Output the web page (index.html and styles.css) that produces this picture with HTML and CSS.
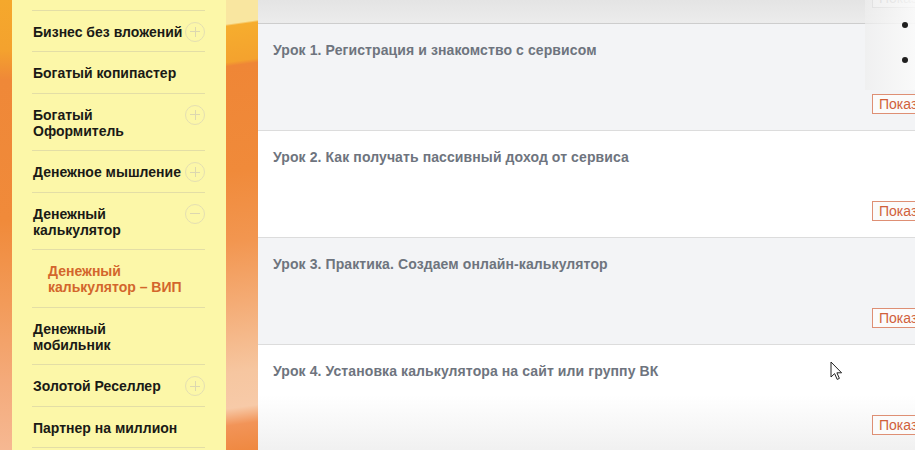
FILE: index.html
```html
<!DOCTYPE html>
<html lang="ru">
<head>
<meta charset="utf-8">
<title>Уроки</title>
<link rel="stylesheet" href="styles.css">
</head>
<body>
<aside class="sidebar">
  <div class="panel">
    <ul class="menu">
      <li class="item"><span class="label"></span><span class="toggle plus"></span></li>
      <li class="item"><span class="label">Бизнес без вложений</span><span class="toggle plus"></span></li>
      <li class="item"><span class="label">Богатый копипастер</span></li>
      <li class="item"><span class="label">Богатый<br>Оформитель</span><span class="toggle plus"></span></li>
      <li class="item"><span class="label">Денежное мышление</span><span class="toggle plus"></span></li>
      <li class="item"><span class="label">Денежный<br>калькулятор</span><span class="toggle minus"></span></li>
      <li class="item sub"><span class="label">Денежный<br>калькулятор – ВИП</span></li>
      <li class="item"><span class="label">Денежный<br>мобильник</span></li>
      <li class="item"><span class="label">Золотой Реселлер</span><span class="toggle plus"></span></li>
      <li class="item"><span class="label">Партнер на миллион</span></li>
    </ul>
  </div>
</aside>
<main class="content">
  <div class="lesson-prev"><button class="btn-show faded">Показать</button></div>
  <section class="lesson alt">
    <h3 class="lesson-title">Урок 1. Регистрация и знакомство с сервисом</h3>
    <button class="btn-show">Показать</button>
  </section>
  <section class="lesson">
    <h3 class="lesson-title">Урок 2. Как получать пассивный доход от сервиса</h3>
    <button class="btn-show">Показать</button>
  </section>
  <section class="lesson alt">
    <h3 class="lesson-title">Урок 3. Практика. Создаем онлайн-калькулятор</h3>
    <button class="btn-show">Показать</button>
  </section>
  <section class="lesson last">
    <h3 class="lesson-title">Урок 4. Установка калькулятора на сайт или группу ВК</h3>
    <button class="btn-show">Показать</button>
  </section>
</main>
<div class="overlay"><span class="dot"></span><span class="dot"></span></div>
<svg class="cursor" width="13" height="20" viewBox="0 0 13 20"><path d="M1 1 L1 16 L4.6 12.6 L7.2 18.4 L9.4 17.4 L6.9 11.8 L11.6 11.8 Z" fill="#fff" stroke="#222" stroke-width="1" stroke-linejoin="round"/></svg>
</body>
</html>
```
FILE: styles.css
```css
* { box-sizing: border-box; }
html, body { margin: 0; padding: 0; }
body {
  width: 915px;
  height: 450px;
  overflow: hidden;
  display: flex;
  position: relative;
  font-family: "Liberation Sans", Arial, sans-serif;
  background: #fff;
}
.sidebar {
  flex: 0 0 258px;
  height: 450px;
  padding: 0 32px 0 12px;
  background:
    linear-gradient(172deg, #f9e6a0 0px, #f9e6a0 24px, #f6ad2e 26px, #f4a22e 62px, #ef8636 66px, #f08a3a 170px, #f29650 240px, #f4ab74 300px, #f6c6a0 370px, #f7caa8 405px, #f29458 422px, #ef8840 450px) right top / 32px 450px no-repeat,
    linear-gradient(to bottom, #f5a82c 0px, #f4a22e 50px, #ef8838 80px, #f08a3a 220px, #f29a58 300px, #f4aa7a 380px, #f6b892 450px) left top / 12px 450px no-repeat,
    #f08a3a;
}
.panel {
  display: flow-root;
  height: 100%;
  background: #fcf7a8;
  padding-left: 20px;
}
.menu {
  list-style: none;
  margin: -31px 0 0 0;
  padding: 0;
  width: 173px;
}
.item {
  display: flex;
  justify-content: space-between;
  align-items: flex-start;
  padding: 13px 0 11.5px 1px;
  border-bottom: 1px solid #e3dea6;
}
.label {
  font-size: 14px;
  font-weight: bold;
  line-height: 16px;
  min-height: 16px;
  color: #1a1a16;
  white-space: nowrap;
}
.sub .label {
  color: #d3662c;
  padding-left: 15px;
}
.toggle {
  position: relative;
  flex: 0 0 20px;
  width: 20px;
  height: 20px;
  margin: -2px 0 -2px 0;
  border: 1px solid #e4dfb2;
  border-radius: 50%;
}
.toggle::before,
.plus::after {
  content: "";
  position: absolute;
  background: #dcd7b0;
}
.toggle::before {
  left: 4px;
  top: 8.5px;
  width: 10px;
  height: 1px;
}
.plus::after {
  left: 8.5px;
  top: 4px;
  width: 1px;
  height: 10px;
}
.content {
  flex: 1 1 auto;
  min-width: 0;
  overflow: hidden;
}
.lesson-prev {
  height: 24px;
  border-bottom: 1px solid #cdcdcd;
  background: linear-gradient(#e4e4e4, #ececec);
  padding-left: 15px;
  overflow: hidden;
}
.lesson {
  height: 107px;
  padding: 18px 0 0 15px;
  border-bottom: 1px solid #dcdcdc;
  background: #fff;
}
.lesson.alt { background: #f3f4f6; }
.lesson.last {
  border-bottom: 0;
  background: linear-gradient(#ffffff 0px, #ffffff 50px, #f1f1f1 104px);
}
.lesson-title {
  margin: 0;
  font-size: 14px;
  font-weight: bold;
  line-height: 16px;
  letter-spacing: 0.1px;
  color: #6e747e;
  white-space: nowrap;
}
.btn-show {
  display: block;
  margin: 36px 0 0 599px;
  height: 20px;
  padding: 0 6px;
  border: 1px solid #de8f74;
  background: #fbfbfb;
  color: #d0603a;
  font-family: "Liberation Sans", Arial, sans-serif;
  font-size: 14px;
  line-height: 18px;
  white-space: nowrap;
}
.btn-show.faded {
  margin-top: -12px;
  border-color: #b9b9b9;
  color: #a5a5a5;
  background: #f2f2f2;
}
.overlay {
  position: absolute;
  left: 865px;
  top: 0;
  width: 50px;
  height: 90px;
  background: linear-gradient(to right, rgba(238,238,238,0.7), rgba(250,250,250,0.92));
}
.dot {
  position: absolute;
  left: 37px;
  width: 6px;
  height: 6px;
  border-radius: 50%;
  background: #1f1f1f;
}
.dot:first-child { top: 22px; }
.dot:last-child { top: 57px; }
.cursor {
  position: absolute;
  left: 830px;
  top: 361px;
}
```
